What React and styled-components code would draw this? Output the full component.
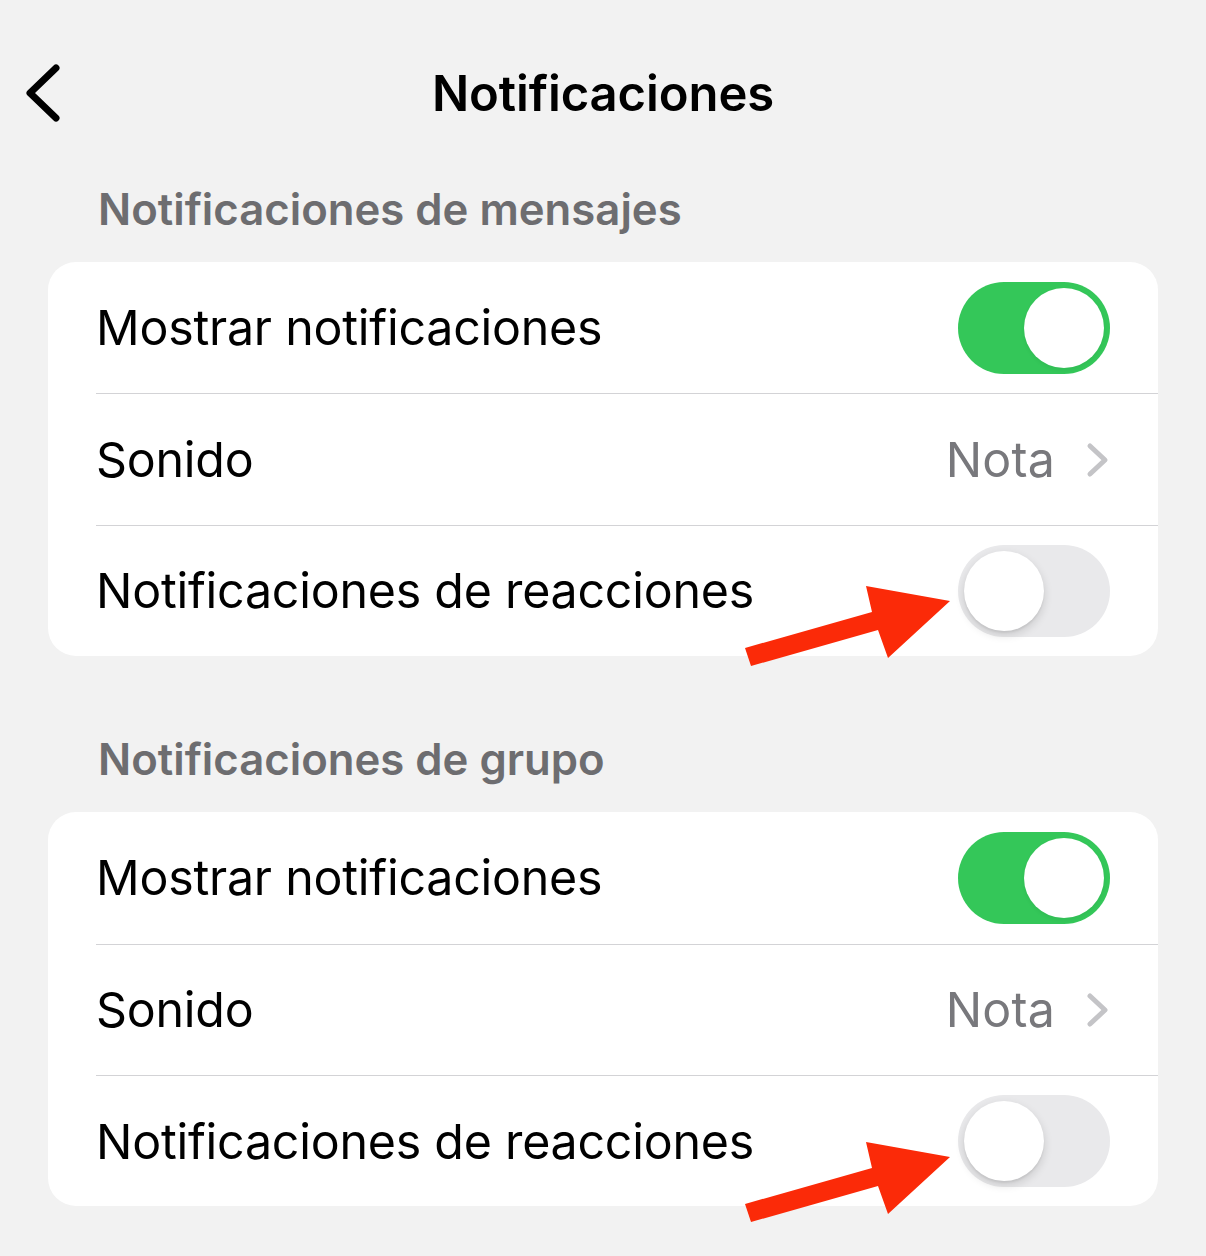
import React from "react";
import styled, { createGlobalStyle } from "styled-components";

const GlobalStyle = createGlobalStyle`
  html, body {
    margin: 0;
    padding: 0;
    background: #f2f2f2;
  }
  body {
    font-family: Inter, "Noto Sans", "Liberation Sans", sans-serif;
    -webkit-font-smoothing: antialiased;
  }
`;

const Screen = styled.div`
  width: 1206px;
  min-height: 1256px;
  background: #f2f2f2;
  overflow: hidden;
`;

const NavBar = styled.header`
  height: 186px;
  display: grid;
  grid-template-columns: 120px 1fr 120px;
  align-items: center;
`;

const BackButton = styled.button`
  border: 0;
  background: none;
  padding: 0 0 0 24px;
  height: 64px;
  display: flex;
  align-items: center;
  cursor: pointer;
`;

const Title = styled.h1`
  margin: 0;
  text-align: center;
  font-size: 49px;
  font-weight: 600;
  color: #000;
  letter-spacing: -0.1px;
`;

const Content = styled.main`
  padding: 0 48px;
  display: flex;
  flex-direction: column;
`;

const SectionTitle = styled.h2`
  margin: ${(p) => (p.$first ? "0" : "80px")} 0 28px 50px;
  height: 48px;
  line-height: 48px;
  font-size: 43.7px;
  font-weight: 600;
  color: #6d6d70;
`;

const Card = styled.section`
  position: relative;
  background: #fff;
  border-radius: 28px;
  display: flex;
  flex-direction: column;
`;

const Row = styled.div`
  padding-left: 48px;
  display: flex;
`;

const RowBody = styled.div`
  flex: 1;
  height: 131.4px;
  box-sizing: border-box;
  display: flex;
  align-items: center;
  justify-content: space-between;
  padding: 0 48px 0 0;
  border-top: ${(p) => (p.$divided ? "1.5px solid #d3d3d6" : "0")};
`;

const Label = styled.span`
  font-size: 48.3px;
  font-weight: 400;
  color: #000;
  letter-spacing: -0.22px;
`;

const Detail = styled.div`
  display: flex;
  align-items: center;
  gap: 31px;
`;

const DetailValue = styled.span`
  font-size: 48.3px;
  font-weight: 400;
  color: #78787c;
  letter-spacing: 0.2px;
`;

const Track = styled.div`
  width: 152px;
  height: 92px;
  border-radius: 46px;
  box-sizing: border-box;
  padding: 6px;
  display: flex;
  justify-content: ${(p) => (p.$on ? "flex-end" : "flex-start")};
  background: ${(p) => (p.$on ? "#34c759" : "#e9e9eb")};
`;

const Knob = styled.div`
  width: 80px;
  height: 80px;
  border-radius: 50%;
  background: #fff;
  box-shadow: ${(p) =>
    p.$on
      ? "0 2px 4px rgba(0,0,0,0.06)"
      : "0 4px 10px rgba(0,0,0,0.14), 0 2px 2px rgba(0,0,0,0.06)"};
`;

const Pointer = styled.svg`
  position: absolute;
  left: 692px;
  top: ${(p) => p.$top}px;
  width: 215px;
  height: 90px;
  pointer-events: none;
`;

const BackIcon = () => (
  <svg width="40" height="60" viewBox="0 0 40 60">
    <path
      d="M32 5 L6 30 L32 55"
      fill="none"
      stroke="#000"
      strokeWidth="7"
      strokeLinecap="round"
      strokeLinejoin="round"
    />
  </svg>
);

const ChevronIcon = () => (
  <svg width="24" height="36" viewBox="0 0 24 36">
    <path
      d="M4 4 L19 18 L4 32"
      fill="none"
      stroke="#c4c4c7"
      strokeWidth="5"
      strokeLinecap="round"
      strokeLinejoin="round"
    />
  </svg>
);

const Toggle = ({ on }) => (
  <Track $on={on}>
    <Knob $on={on} />
  </Track>
);

const RedArrow = ({ top }) => (
  <Pointer $top={top} viewBox="0 0 215 90">
    <polygon
      points="5,68 132,32 126,6 210,21 148,78 138,50 11,86"
      fill="#fb2a08"
    />
  </Pointer>
);

const NotificationGroup = ({ title, first, arrowTop }) => (
  <>
    <SectionTitle $first={first}>{title}</SectionTitle>
    <Card>
      <Row>
        <RowBody>
          <Label>Mostrar notificaciones</Label>
          <Toggle on />
        </RowBody>
      </Row>
      <Row>
        <RowBody $divided>
          <Label>Sonido</Label>
          <Detail>
            <DetailValue>Nota</DetailValue>
            <ChevronIcon />
          </Detail>
        </RowBody>
      </Row>
      <Row>
        <RowBody $divided>
          <Label>Notificaciones de reacciones</Label>
          <Toggle on={false} />
        </RowBody>
      </Row>
      <RedArrow top={arrowTop} />
    </Card>
  </>
);

export default function App() {
  return (
    <Screen>
      <GlobalStyle />
      <NavBar>
        <BackButton aria-label="Atrás">
          <BackIcon />
        </BackButton>
        <Title>Notificaciones</Title>
        <span />
      </NavBar>
      <Content>
        <NotificationGroup title="Notificaciones de mensajes" first arrowTop={318} />
        <NotificationGroup title="Notificaciones de grupo" arrowTop={324} />
      </Content>
    </Screen>
  );
}
